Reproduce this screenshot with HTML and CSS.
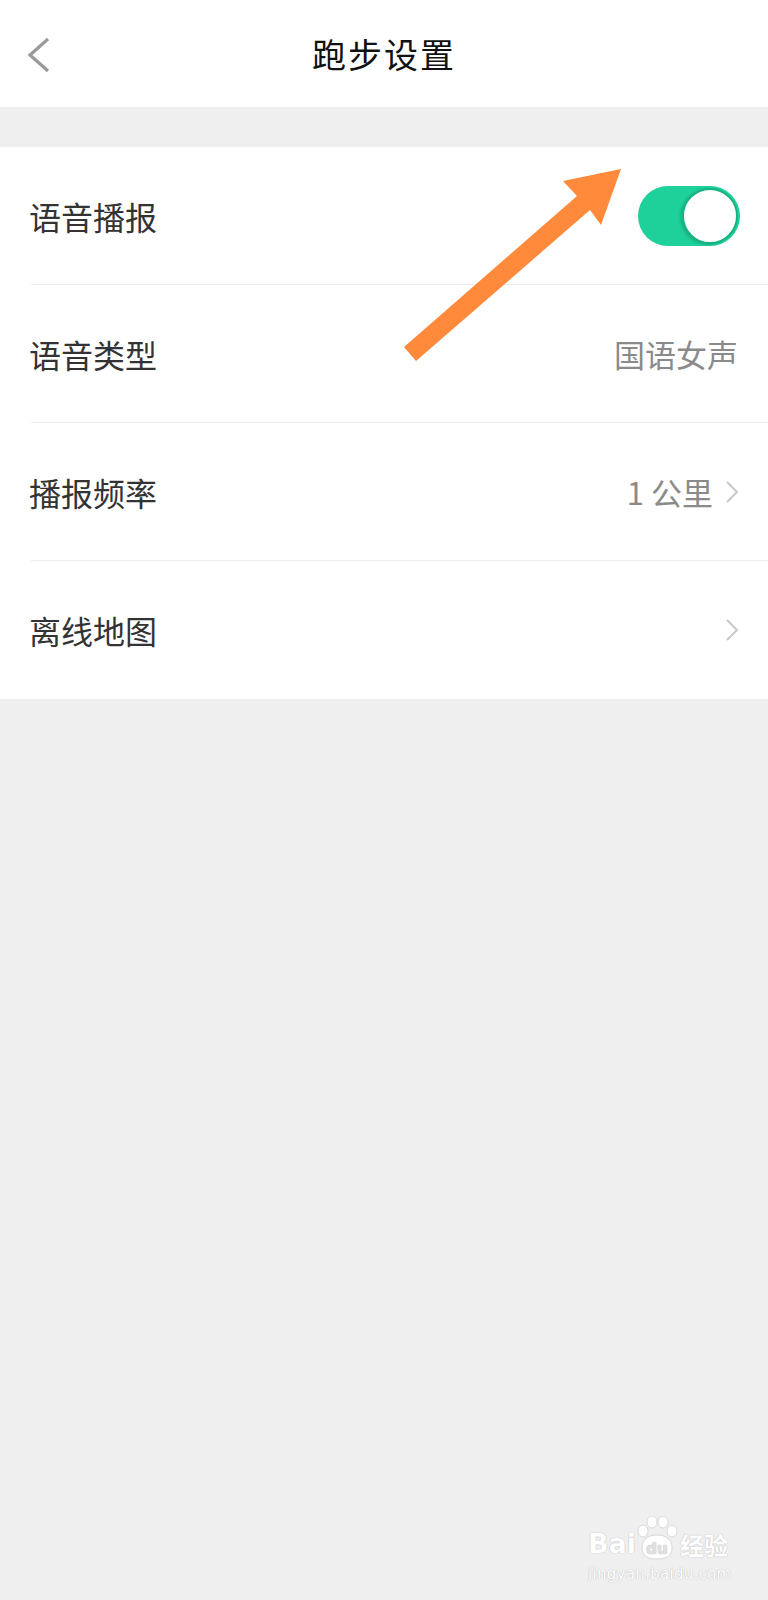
FILE: index.html
```html
<!DOCTYPE html>
<html lang="zh-CN">
<head>
    <meta charset="UTF-8">
    <meta name="viewport" content="width=device-width, initial-scale=1.0">
    <title>跑步设置</title>
    <link rel="stylesheet" href="styles.css">
</head>
<body>
    <!-- Top navigation bar -->
    <header class="topbar">
        <a class="back" href="#" aria-label="返回">
            <svg width="24" height="36" viewBox="0 0 24 36">
                <polyline points="21,2 3,18 21,34" fill="none" stroke="#9a9a9a" stroke-width="3.2"/>
            </svg>
        </a>
        <h1 class="title">跑步设置</h1>
        <span></span>
    </header>

    <!-- Settings list -->
    <ul class="settings">
        <li class="row">
            <span class="label">语音播报</span>
            <span class="switch on"><span class="knob"></span></span>
        </li>
        <li class="row">
            <span class="label">语音类型</span>
            <span class="value">国语女声</span>
        </li>
        <li class="row">
            <span class="label">播报频率</span>
            <span class="value">1 公里</span>
            <svg class="chev" width="14" height="24" viewBox="0 0 14 24">
                <polyline points="2,2 12,12 2,22" fill="none" stroke="#c8c8c8" stroke-width="2"/>
            </svg>
        </li>
        <li class="row">
            <span class="label">离线地图</span>
            <svg class="chev" width="14" height="24" viewBox="0 0 14 24">
                <polyline points="2,2 12,12 2,22" fill="none" stroke="#c8c8c8" stroke-width="2"/>
            </svg>
        </li>
    </ul>

    <!-- Orange annotation arrow drawn over the page -->
    <svg class="arrow" width="768" height="400" viewBox="0 0 768 400">
        <polygon points="404,347 577,196 563,181 621,169 601,225 590,210 416,361" fill="#ff8a3c"/>
    </svg>

    <!-- Watermark -->
    <div class="watermark">
        <div class="brand">
            <span>Bai</span>
            <svg class="paw" width="42" height="44" viewBox="0 0 42 44">
                <g fill="#fff" stroke="#d8d8d8" stroke-width="1">
                    <ellipse cx="7" cy="15" rx="5" ry="6"/>
                    <ellipse cx="16" cy="6" rx="5" ry="6"/>
                    <ellipse cx="27" cy="6" rx="5" ry="6"/>
                    <ellipse cx="36" cy="15" rx="5" ry="6"/>
                    <path d="M6,32 C6,22 14,19 21,19 C28,19 36,22 36,32 C36,40 30,43 21,43 C12,43 6,40 6,32 Z"/>
                </g>
                <text x="21" y="38" text-anchor="middle" class="du">du</text>
            </svg>
            <span>经验</span>
        </div>
        <div class="site">jingyan.baidu.com</div>
    </div>
</body>
</html>
```

FILE: styles.css
```css
/* Basic reset */
body, h1, ul, li {
    margin: 0;
    padding: 0;
}

body {
    background-color: #efefef;
    font-family: "Noto Sans CJK SC", "Noto Sans", sans-serif;
    min-height: 1600px;
    position: relative;
    overflow: hidden;
}

/* Top bar */
.topbar {
    height: 107px;
    background-color: #fff;
    display: grid;
    grid-template-columns: 1fr auto 1fr;
    align-items: center;
}

.back {
    display: flex;
    padding-left: 27px;
    padding-top: 2px;
}

.title {
    font-size: 34px;
    font-weight: 400;
    color: #111;
    letter-spacing: 2px;
}

/* Settings list */
.settings {
    list-style: none;
    background-color: #fff;
    margin-top: 40px;
}

.row {
    height: 137px;
    margin-left: 31px;
    padding-right: 30px;
    border-bottom: 1px solid #ececec;
    display: flex;
    align-items: center;
}

.row:last-child {
    border-bottom: none;
    height: 138px;
}

.label {
    flex: 1;
    font-size: 32px;
    color: #333;
    margin-left: -2px;
}

.value {
    font-size: 31px;
    color: #8a8a8a;
}

.chev {
    margin-left: 12px;
    margin-right: -1px;
}

/* Toggle switch */
.switch {
    width: 102px;
    height: 60px;
    border-radius: 30px;
    background-color: #1ed099;
    display: flex;
    align-items: center;
    justify-content: flex-end;
    padding: 0 2px;
    box-sizing: border-box;
    margin-right: -2px;
}

.knob {
    width: 52px;
    height: 52px;
    border-radius: 50%;
    background-color: #fff;
    border: 2px solid #17b383;
    box-shadow: -2px 1px 3px rgba(0, 0, 0, 0.15);
}

/* Annotation arrow */
.arrow {
    position: absolute;
    top: 0;
    left: 0;
    pointer-events: none;
}

/* Watermark */
.watermark {
    position: absolute;
    left: 588px;
    top: 1516px;
    color: #fff;
    text-shadow: 0 0 1px #bdbdbd, 0 0 1px #bdbdbd;
    font-family: "DejaVu Sans", sans-serif;
}

.brand {
    display: flex;
    align-items: flex-end;
    font-size: 27px;
    font-weight: bold;
    line-height: 1;
}

.brand span:last-child {
    font-family: "Noto Sans CJK SC", sans-serif;
    font-size: 24px;
    margin-left: 2px;
}

.paw {
    margin-bottom: -3px;
}

.du {
    font-family: "DejaVu Sans", sans-serif;
    font-size: 15px;
    font-weight: bold;
    fill: #e2e2e2;
}

.site {
    font-size: 15px;
    letter-spacing: 0.3px;
    margin-top: 8px;
}
```
